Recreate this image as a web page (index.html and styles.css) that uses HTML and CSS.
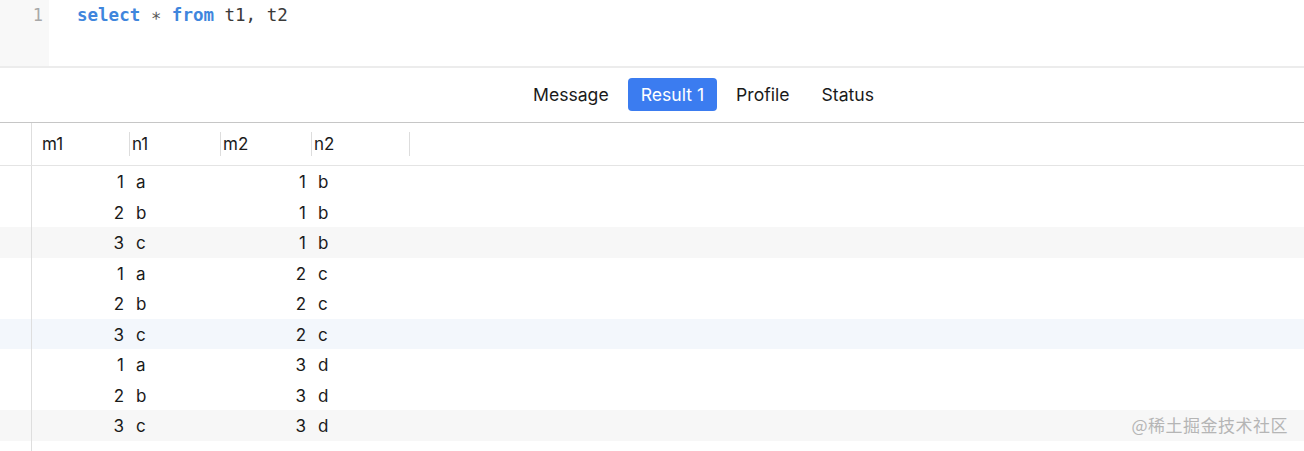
FILE: index.html
```html
<!DOCTYPE html>
<html lang="en">

<head>
    <meta charset="UTF-8" />
    <meta name="viewport" content="width=device-width, initial-scale=1.0" />
    <title>Query</title>
    <link rel="stylesheet" href="styles.css">
</head>

<body>
    <!-- SQL editor -->
    <div class="editor">
        <div class="gutter"><span class="line-no">1</span></div>
        <div class="code"><span class="kw">select</span> <span class="op">∗</span> <span class="kw">from</span> t1, t2</div>
    </div>

    <!-- Result tabs -->
    <div class="tabs">
        <span class="tab">Message</span>
        <span class="tab active">Result 1</span>
        <span class="tab">Profile</span>
        <span class="tab">Status</span>
    </div>

    <!-- Result grid -->
    <div class="grid">
        <div class="row head">
            <div class="lead"></div>
            <div class="cell c1"><span class="hd first">m1</span></div>
            <div class="cell c2"><span class="hd">n1</span></div>
            <div class="cell c3"><span class="hd">m2</span></div>
            <div class="cell c4"><span class="hd">n2</span></div>
            <div class="cell end"></div>
        </div>
        <div class="row"><div class="lead"></div><div class="cell c1 num">1</div><div class="cell c2">a</div><div class="cell c3 num">1</div><div class="cell c4">b</div></div>
        <div class="row"><div class="lead"></div><div class="cell c1 num">2</div><div class="cell c2">b</div><div class="cell c3 num">1</div><div class="cell c4">b</div></div>
        <div class="row alt"><div class="lead"></div><div class="cell c1 num">3</div><div class="cell c2">c</div><div class="cell c3 num">1</div><div class="cell c4">b</div></div>
        <div class="row"><div class="lead"></div><div class="cell c1 num">1</div><div class="cell c2">a</div><div class="cell c3 num">2</div><div class="cell c4">c</div></div>
        <div class="row"><div class="lead"></div><div class="cell c1 num">2</div><div class="cell c2">b</div><div class="cell c3 num">2</div><div class="cell c4">c</div></div>
        <div class="row hover"><div class="lead"></div><div class="cell c1 num">3</div><div class="cell c2">c</div><div class="cell c3 num">2</div><div class="cell c4">c</div></div>
        <div class="row"><div class="lead"></div><div class="cell c1 num">1</div><div class="cell c2">a</div><div class="cell c3 num">3</div><div class="cell c4">d</div></div>
        <div class="row"><div class="lead"></div><div class="cell c1 num">2</div><div class="cell c2">b</div><div class="cell c3 num">3</div><div class="cell c4">d</div></div>
        <div class="row alt"><div class="lead"></div><div class="cell c1 num">3</div><div class="cell c2">c</div><div class="cell c3 num">3</div><div class="cell c4">d</div></div>
        <div class="row last"><div class="lead"></div></div>
    </div>

    <div class="watermark">@稀土掘金技术社区</div>
</body>

</html>
```

FILE: styles.css
```css
body {
    margin: 0;
    font-family: Inter, "Noto Sans", sans-serif;
    color: #1a1a1a;
    background: #fff;
    width: 1304px;
    height: 451px;
    overflow: hidden;
    position: relative;
}

/* editor */
.editor {
    display: flex;
    height: 66px;
    border-bottom: 2px solid #ececec;
}

.gutter {
    width: 49px;
    background: #f8f8f8;
    text-align: right;
    box-sizing: border-box;
    padding-right: 6px;
}

.line-no {
    font-family: "DejaVu Sans Mono", monospace;
    font-size: 17px;
    line-height: 30px;
    color: #a8a8a8;
}

.code {
    padding-left: 28px;
    font-family: "DejaVu Sans Mono", monospace;
    font-size: 17.5px;
    line-height: 30px;
    color: #3a3a3a;
}

.kw {
    color: #3f86dd;
    font-weight: bold;
}

.op {
    color: #555;
}

/* tabs */
.tabs {
    display: flex;
    justify-content: center;
    align-items: center;
    gap: 6px;
    height: 55px;
    box-sizing: border-box;
    padding: 0 0 2px 103px;
    border-bottom: 1px solid #c6c6c6;
}

.tab {
    font-size: 17.6px;
    padding: 0 13px;
    line-height: 33px;
    border-radius: 4px;
    color: #1a1a1a;
}

.tab.active {
    background: #3b7cf0;
    color: #fff;
}

/* grid */
.row {
    display: flex;
    height: 30.5px;
    font-size: 17px;
}

.row.head {
    height: 42px;
    align-items: center;
    border-bottom: 1px solid #e4e4e4;
}

.row.alt {
    background: #f7f7f7;
}

.row.hover {
    background: #f3f7fc;
}

.row.last {
    height: 20px;
}

.lead {
    width: 31px;
    border-right: 1px solid #dedede;
    flex-shrink: 0;
}

.head .lead {
    align-self: stretch;
}

.cell {
    box-sizing: border-box;
    padding: 2px 6px 0;
    display: flex;
    align-items: center;
}

.num {
    justify-content: flex-end;
}

.c1 {
    width: 98px;
}

.c2,
.c3 {
    width: 91px;
}

.c4 {
    width: 98px;
}

.head .cell {
    padding: 0;
    border-right: 1px solid #dddddd;
    height: 24px;
}

.head .end {
    border: none;
}

.hd {
    padding-left: 2px;
}

.hd.first {
    padding-left: 10px;
}

.watermark {
    position: absolute;
    right: 16px;
    bottom: 14px;
    font-family: "Noto Sans CJK SC", sans-serif;
    font-size: 17px;
    color: #b5b5b5;
    letter-spacing: 0.5px;
}
```
